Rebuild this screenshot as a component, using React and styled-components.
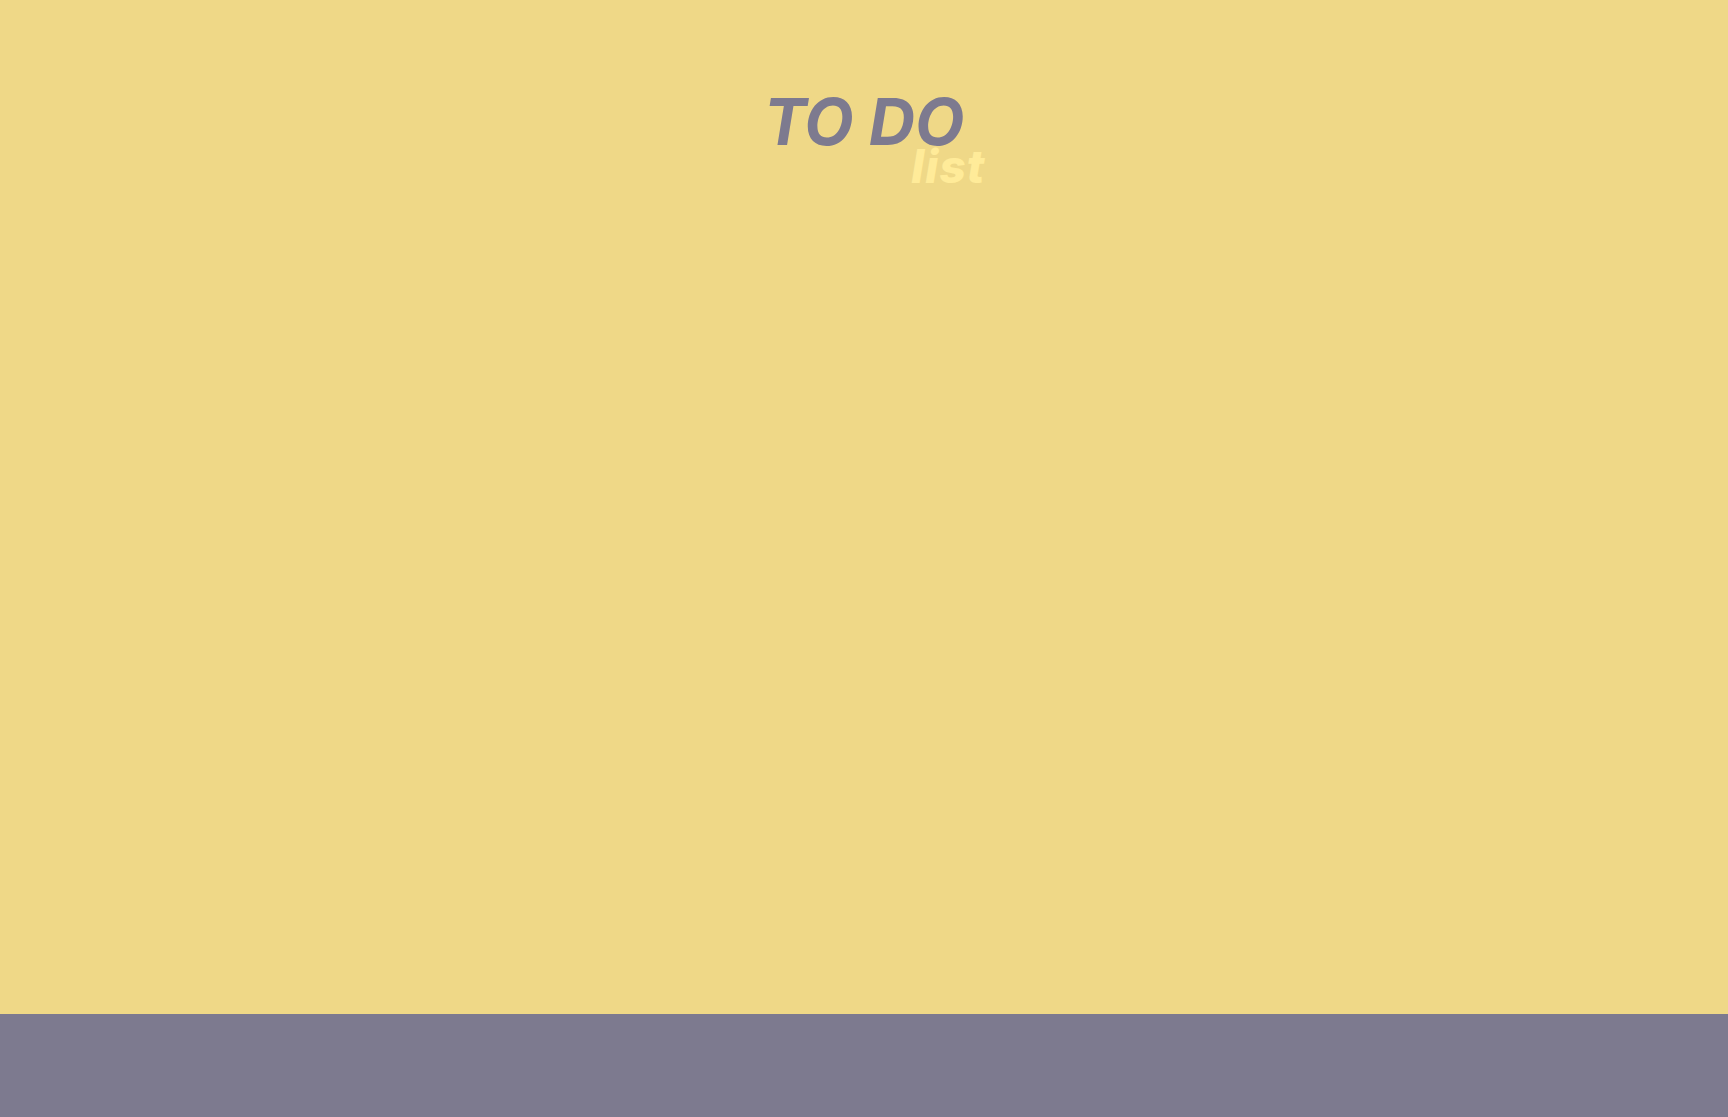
import React from 'react';
import styled, { createGlobalStyle } from 'styled-components';

const GlobalStyle = createGlobalStyle`
  html, body {
    margin: 0;
    padding: 0;
  }

  body {
    font-family: Inter, "Liberation Sans", sans-serif;
    background-color: #efd887;
  }
`;

const App = () => {
  return (
    <Page>
      <GlobalStyle />
      <Main>
        <Header>
          <Title>
            TO DO
            <Subtitle>list</Subtitle>
          </Title>
        </Header>
      </Main>
      <Footer />
    </Page>
  );
};

const Page = styled.div`
  display: flex;
  flex-direction: column;
  min-height: 100vh;
  width: 100%;
`;

const Main = styled.main`
  flex: 1;
  background-color: #efd887;
  display: flex;
  flex-direction: column;
  align-items: center;
`;

const Header = styled.header`
  padding-top: 90px;
  display: flex;
  justify-content: center;
`;

const Title = styled.h1`
  position: relative;
  margin: 0;
  font-size: 64px;
  line-height: 1;
  font-weight: 700;
  font-style: italic;
  color: #7d7a8f;
`;

const Subtitle = styled.span`
  position: absolute;
  top: 53px;
  right: -21px;
  font-size: 46px;
  line-height: 1;
  font-weight: 800;
  letter-spacing: 1px;
  color: #ffeb99;
`;

const Footer = styled.footer`
  height: 103px;
  background-color: #7d7a8f;
`;

export default App;
